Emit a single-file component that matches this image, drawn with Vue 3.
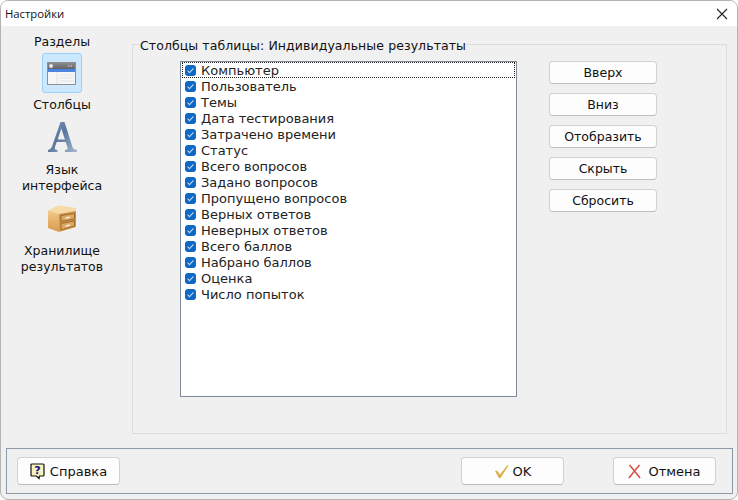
<script setup>
const rows = ['Компьютер','Пользователь','Темы','Дата тестирования','Затрачено времени','Статус','Всего вопросов','Задано вопросов','Пропущено вопросов','Верных ответов','Неверных ответов','Всего баллов','Набрано баллов','Оценка','Число попыток']
const actions = ['Вверх','Вниз','Отобразить','Скрыть','Сбросить']
</script>

<template>
  <div class="window">
    <header class="titlebar">
      <span class="title">Настройки</span>
      <svg class="close" width="12" height="12" viewBox="0 0 12 12"><path d="M1 1L11 11M11 1L1 11" stroke="#222" stroke-width="1.1" fill="none"/></svg>
    </header>
    <main class="body">
      <aside class="sidebar">
        <div class="side-head">Разделы</div>
        <div class="side-item selected-item">
          <div class="icon-box">
            <svg width="29" height="23" viewBox="0 0 29 23">
              <defs><linearGradient id="tb" x1="0" y1="0" x2="0" y2="1"><stop offset="0" stop-color="#8a8a8c"/><stop offset="1" stop-color="#5f6064"/></linearGradient></defs>
              <rect x=".5" y=".5" width="28" height="22" fill="#f6f6f6" stroke="#8f8f8f"/>
              <rect x="1" y="1" width="27" height="6.500" fill="url(#tb)"/>
              <rect x="1" y="7" width="27" height="3" fill="#4a84e0"/>
              <circle cx="4" cy="4" r="2" fill="#e4e4e4"/>
              <rect x="21" y="3" width="1.500" height="2" fill="#a8a8a8"/><rect x="23.500" y="3" width="1.500" height="2" fill="#a8a8a8"/><rect x="26" y="3" width="1.500" height="2" fill="#c96060"/>
              <path d="M10 10V22" stroke="#e0e0e0"/>
              <path d="M12 13H27M12 16H27M12 19H27" stroke="#e4e4e4"/>
            </svg>
          </div>
          <div class="side-label">Столбцы</div>
        </div>
        <div class="side-item lang-item">
          <svg width="31" height="30" viewBox="0 0 31 30">
            <defs><linearGradient id="ag" x1="0" y1="0" x2="1" y2="1"><stop offset="0" stop-color="#7d94b6"/><stop offset=".45" stop-color="#5b769f"/><stop offset="1" stop-color="#a6b7ce"/></linearGradient></defs>
            <path fill="url(#ag)" d="M13.500 0H17.500L25.500 25C26.100 26.800 27.500 27.500 30 28V30H18V28C20.500 27.800 21 27 20.400 25.300L18.700 20H9.700L8 25C7.400 27 8.200 27.800 10.500 28V30H1V28C3 27.500 4.200 26.500 5 24.500ZM10.700 17.500H17.900L14.300 6.500Z"/>
          </svg>
          <div class="side-label">Язык<br>интерфейса</div>
        </div>
        <div class="side-item store-item">
          <svg width="30" height="27" viewBox="0 0 30 27">
            <defs>
              <linearGradient id="bg1" x1="0" y1="0" x2="0" y2="1"><stop offset="0" stop-color="#f2c98a"/><stop offset="1" stop-color="#d9994c"/></linearGradient>
              <linearGradient id="bg2" x1="0" y1="0" x2="0" y2="1"><stop offset="0" stop-color="#c98d45"/><stop offset="1" stop-color="#d9a050"/></linearGradient>
            </defs>
            <path d="M1 5.500L11 .500L29 3L29 6L12 9Z" fill="#f7d9a6"/>
            <path d="M1 5.500L12 9V27L1 23Z" fill="url(#bg1)"/>
            <path d="M12 9L29 6V22L12 27Z" fill="url(#bg2)"/>
            <path d="M14 10.500L27.500 8.500V14L14 16.500ZM14 18.500L27.500 15.800V21L14 25Z" fill="#dda85e" stroke="#8f5c22" stroke-width=".8"/>
            <path d="M18.500 13L23 12.300M18.500 21L23 20" stroke="#ececec" stroke-width="1.600"/>
          </svg>
          <div class="side-label">Хранилище<br>результатов</div>
        </div>
      </aside>
      <section class="group">
        <div class="legend">Столбцы таблицы: Индивидуальные результаты</div>
        <div class="group-inner">
          <ul class="list">
            <li v-for="(r, i) in rows" :key="r" class="row" :class="{ focused: i === 0 }">
              <span class="check">
                <svg width="9" height="9" viewBox="0 0 9 9"><path d="M1.500 4.700L3.500 6.700L7.500 2.300" stroke="#b8d4f0" stroke-width="1.100" fill="none"/></svg>
              </span>
              <span class="row-text">{{ r }}</span>
            </li>
          </ul>
          <div class="actions">
            <button v-for="a in actions" :key="a" class="btn action">{{ a }}</button>
          </div>
        </div>
      </section>
    </main>
    <footer class="footer">
      <button class="btn foot help">
        <svg width="15" height="17" viewBox="0 0 15 17">
          <path d="M2 1H13Q14 1 14 2V12Q14 13 13 13H9.500L9 15.500L6.500 13H2Q1 13 1 12V2Q1 1 2 1Z" fill="#f6f2c0" stroke="#111" stroke-width="1.200"/>
          <text x="7.500" y="11" text-anchor="middle" class="q">?</text>
        </svg>
        Справка
      </button>
      <div class="foot-right">
        <button class="btn foot">
          <svg width="15" height="15" viewBox="0 0 15 15"><path d="M1 7L3 6.500L6 10.500L13.500 1L14.500 1.500L6.500 14H5Z" fill="#dcae46"/></svg>
          OK
        </button>
        <button class="btn foot cancel">
          <svg width="13" height="15" viewBox="0 0 13 15"><path d="M1.500 1L6.500 7M11.500 1L6.500 7M6.500 7L1 14M6.500 7L12 14" stroke="#d9534a" stroke-width="1.600" fill="none"/></svg>
          Отмена
        </button>
      </div>
    </footer>
  </div>
</template>

<style scoped>
.window {
  box-sizing: border-box;
  width: 738px;
  height: 500px;
  display: flex;
  flex-direction: column;
  background: #f0f0f0;
  border: 1px solid #b4b4b4;
  border-radius: 8px;
  overflow: hidden;
  font-family: "DejaVu Sans", sans-serif;
  font-size: 12.5px;
  color: #111;
}
.titlebar {
  height: 25px;
  flex: none;
  background: #fff;
  display: flex;
  align-items: center;
  justify-content: space-between;
  padding: 0 9px 0 4px;
}
.title { font-family: "Open Sans", sans-serif; font-size: 11.3px; }
.body {
  flex: 1;
  display: flex;
  padding-top: 18px;
  min-height: 0;
}
.sidebar {
  width: 122px;
  flex: none;
  margin-right: 9px;
  display: flex;
  flex-direction: column;
  align-items: center;
  text-align: center;
  line-height: 16px;
  margin-top: -10px;
}
.side-head { height: 17px; }
.side-item { display: flex; flex-direction: column; align-items: center; }
.icon-box {
  box-sizing: border-box;
  width: 40px;
  height: 40px;
  margin-top: 2px;
  background: #cce8ff;
  border: 1px solid #99d1ff;
  border-radius: 3px;
  display: flex;
  align-items: center;
  justify-content: center;
}
.selected-item .side-label { margin-top: 4px; }
.lang-item { margin-top: 9px; }
.lang-item .side-label { margin-top: 10px; }
.store-item { margin-top: 11px; }
.store-item .side-label { margin-top: 11px; }
.group {
  position: relative;
  box-sizing: border-box;
  width: 595px;
  height: 390px;
  border: 1px solid #dcdcdc;
}
.legend {
  position: absolute;
  top: -7px;
  left: 7px;
  line-height: 15px;
  letter-spacing: .08px;
  background: #f0f0f0;
}
.group-inner {
  display: flex;
  padding: 16px 0 0 47px;
}
.list {
  box-sizing: border-box;
  width: 337px;
  height: 336px;
  margin: 0;
  padding: 0 1px 1px;
  list-style: none;
  background: #fff;
  border: 1px solid #7f8a99;
}
.row {
  box-sizing: border-box;
  height: 16px;
  display: flex;
  align-items: center;
  padding-left: 2px;
  border: 1px solid transparent;
  color: #222;
  font-size: 13px;
}
.row.focused { border: 1px dotted #222; }
.row-text { margin-left: 5px; }
.check {
  width: 11px;
  height: 11px;
  border-radius: 3px;
  background: #0f68c4;
  display: flex;
  align-items: center;
  justify-content: center;
}
.actions {
  margin-left: 32px;
  display: flex;
  flex-direction: column;
  gap: 9px;
}
.btn {
  box-sizing: border-box;
  font: inherit;
  color: #111;
  background: #fdfdfd;
  border: 1px solid #d2d2d2;
  border-bottom-color: #bdbdbd;
  border-radius: 4px;
  display: flex;
  align-items: center;
  justify-content: center;
  padding: 0;
}
.action { width: 108px; height: 23px; }
.footer {
  box-sizing: border-box;
  flex: none;
  margin: 14px 4px 5px 5px;
  height: 46px;
  border: 1px solid #8c99a6;
  display: flex;
  justify-content: space-between;
  align-items: center;
  padding: 0 16px 0 10px;
}
.foot { width: 103px; height: 28px; gap: 4px; font-size: 13px; }
.help { gap: 5px; }
.cancel { gap: 7px; }
.foot-right { display: flex; gap: 49px; }
.q { font-family: "DejaVu Sans", sans-serif; font-size: 11px; font-weight: 700; fill: #10108a; }
</style>

<style>
html, body { margin: 0; background: #fff; }
</style>
